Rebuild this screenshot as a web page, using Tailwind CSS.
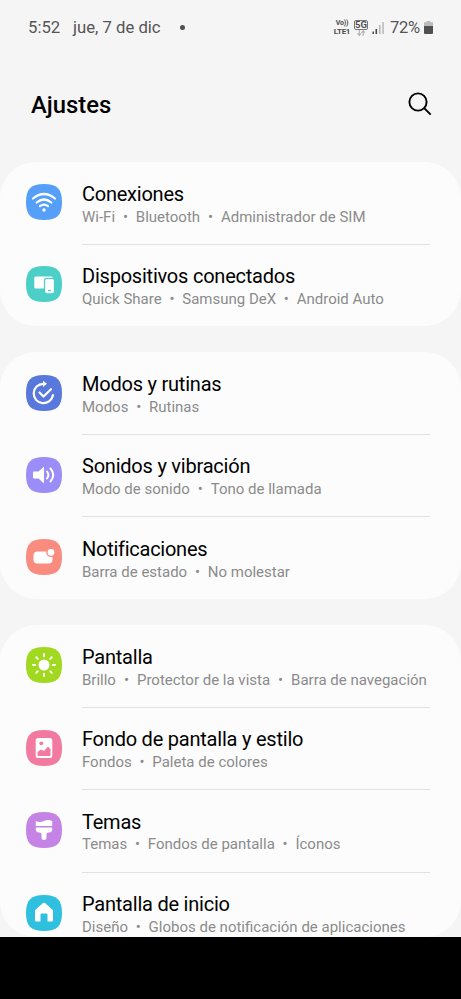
<!DOCTYPE html>
<html lang="es">
<head>
<meta charset="utf-8">
<title>Ajustes</title>
<script src="https://cdn.jsdelivr.net/npm/@tailwindcss/browser@4"></script>
</head>
<body class="flex h-[999px] w-[461px] flex-col overflow-hidden bg-[#f5f5f5] font-[Roboto,sans-serif] text-black">
<div class="flex h-[54px] shrink-0 items-center pl-[28px] pr-[28px] pt-px text-[16.700px] leading-[20px] text-[#555]">
  <span class="w-[45px]">5:52</span>
  <span>jue, 7 de dic</span>
  <span class="ml-[19px] size-[5px] rounded-full bg-[#505050]"></span>
  <div class="ml-auto flex items-center">
    <div class="mr-[3px] flex w-[18px] flex-col items-center font-bold text-[#4c4c4c]"><span class="text-[7px] leading-[8px] tracking-[-0.200px]">Vo))</span><span class="text-[8px] leading-[9px] tracking-[-0.300px]">LTE1</span></div>
    <div class="mr-[4px] flex w-[14px] flex-col items-center">
      <span class="flex h-[10px] w-[14px] items-center justify-center rounded-[2px] border border-[#777] text-[9.500px] font-bold leading-[8px] text-[#505050]">5G</span>
      <svg class="h-[6px] w-[10px]" viewBox="0 0 10 7" fill="none" stroke="#aaa" stroke-width="1.200"><path d="M3 0v6M.8 4 3 6.200 5.200 4M7.500 7V1M5.500 3l2-2 2 2"/></svg>
    </div>
    <svg class="mr-[6px] h-[13px] w-[12px]" viewBox="0 0 12 13"><path d="M.5 10.500h1.500V13H.5zM3.500 8h1.600v5H3.500z" fill="#4b4b4b"/><path d="M7 4h1.600v9H7zM10.300 1h1.500v12h-1.500z" fill="#b9b9b9"/></svg>
    <span class="w-[34px] whitespace-nowrap text-[16.600px] tracking-[-0.300px]">72%</span>
    <svg class="h-[13px] w-[9px]" viewBox="0 0 9 13"><path d="M2.500 0h4v1.300H9V6H0V1.300h2.500z" fill="#bbb"/><path d="M0 5h9v7q0 1-1 1H1q-1 0-1-1z" fill="#505050"/></svg>
  </div>
</div>
<header class="flex h-[108px] shrink-0 items-center justify-between pb-[8px] pl-[31px] pr-[29px]">
  <h1 class="pt-[2px] text-[23.800px] font-medium leading-[32px]">Ajustes</h1>
  <svg class="size-[24px]" viewBox="0 0 24 24" fill="none" stroke="#000" stroke-width="1.900"><circle cx="10" cy="10" r="8.600"/><path d="m16.200 16.200 6.500 6.500"/></svg>
</header>
<main class="flex h-[775px] shrink-0 flex-col gap-[26px] overflow-hidden">
  <section class="h-[164px] shrink-0 rounded-[36px] bg-[#fcfcfc] pl-[25.600px] pr-[31px]">
    <div class="flex h-[83px]">
      <svg class="mt-[22.400px] mr-[20.400px] size-[36px] shrink-0" viewBox="0 0 36 36" fill="none"><path d="M18 0C31 0 36 5 36 18S31 36 18 36 0 31 0 18 5 0 18 0Z" fill="#559ff8"/><g stroke="#fff" stroke-width="2.200" stroke-linecap="round"><path d="M7 14.500q11-9 22 0M10.700 18.500q7.300-6 14.600 0M14 22.200q4-3.200 8 0"/></g><circle cx="18" cy="26" r="1.700" fill="#fff"/></svg>
      <div class="flex-1 border-b border-[#e2e2e2] pt-[19px]"><h2 class="text-[20px] leading-[26px] tracking-[-0.240px]">Conexiones</h2><p class="flex text-[15px] leading-[20px] text-[#8b8b8b]"><span>Wi-Fi</span><i class="w-[20.800px] text-center not-italic">•</i><span>Bluetooth</span><i class="w-[20.800px] text-center not-italic">•</i><span>Administrador de SIM</span></p></div>
    </div>
    <div class="flex h-[81px]">
      <svg class="mt-[21.300px] mr-[20.400px] size-[36px] shrink-0" viewBox="0 0 36 36"><path d="M18 0C31 0 36 5 36 18S31 36 18 36 0 31 0 18 5 0 18 0Z" fill="#4bcfc7"/><rect x="8.300" y="10.500" width="18.500" height="12" rx="1.500" fill="#fff"/><rect x="18.500" y="12.300" width="10" height="15.500" rx="2.300" fill="#fff" stroke="#4bcfc7" stroke-width="1.300"/><path d="M22 24.500h3" stroke="#4bcfc7" stroke-width="1.200"/></svg>
      <div class="flex-1 pt-[18px]"><h2 class="text-[20px] leading-[26px] tracking-[-0.220px]">Dispositivos conectados</h2><p class="flex text-[15px] leading-[20px] text-[#8b8b8b]"><span>Quick Share</span><i class="w-[20.600px] text-center not-italic">•</i><span>Samsung DeX</span><i class="w-[20.600px] text-center not-italic">•</i><span>Android Auto</span></p></div>
    </div>
  </section>
  <section class="h-[247px] shrink-0 rounded-[36px] bg-[#fcfcfc] pl-[25.600px] pr-[31px]">
    <div class="flex h-[83px]">
      <svg class="mt-[22.500px] mr-[20.400px] size-[36px] shrink-0" viewBox="0 0 36 36" fill="none"><path d="M18 0C31 0 36 5 36 18S31 36 18 36 0 31 0 18 5 0 18 0Z" fill="#5878dc"/><g stroke="#fff" stroke-width="2.200" stroke-linecap="round" stroke-linejoin="round"><path d="M18.500 8.800h-1.200A9.700 9.700 0 1 0 27 20"/><path d="m13.500 17.500 4 4 7.500-7.300"/></g><path d="m17 5.700 4 3.100-4 3.100z" fill="#fff"/></svg>
      <div class="flex-1 border-b border-[#e2e2e2] pt-[19px]"><h2 class="text-[20px] leading-[26px] tracking-[-0.220px]">Modos y rutinas</h2><p class="flex text-[15px] leading-[20px] text-[#8b8b8b]"><span>Modos</span><i class="w-[20.600px] text-center not-italic">•</i><span>Rutinas</span></p></div>
    </div>
    <div class="flex h-[82px]">
      <svg class="mt-[22px] mr-[20.400px] size-[36px] shrink-0" viewBox="0 0 36 36" fill="none"><path d="M18 0C31 0 36 5 36 18S31 36 18 36 0 31 0 18 5 0 18 0Z" fill="#9a8df8"/><path d="M8 14.500h4.500l5.500-5v17l-5.500-5H8q-1 0-1-1v-5q0-1 1-1Z" fill="#fff"/><path d="M21 14.500q2.800 3.500 0 7M24.500 11.500q5.500 6.500 0 13" stroke="#fff" stroke-width="2" stroke-linecap="round"/></svg>
      <div class="flex-1 border-b border-[#e2e2e2] pt-[18px]"><h2 class="text-[20px] leading-[26px] tracking-[-0.220px]">Sonidos y vibración</h2><p class="flex text-[15px] leading-[20px] text-[#8b8b8b]"><span>Modo de sonido</span><i class="w-[21px] text-center not-italic">•</i><span>Tono de llamada</span></p></div>
    </div>
    <div class="flex h-[82px]">
      <svg class="mt-[22.400px] mr-[20.400px] size-[36px] shrink-0" viewBox="0 0 36 36"><path d="M18 0C31 0 36 5 36 18S31 36 18 36 0 31 0 18 5 0 18 0Z" fill="#fa8b7f"/><rect x="7.500" y="12.500" width="19" height="12" rx="4" fill="#fff"/><circle cx="25" cy="13.300" r="4.100" fill="#fff" stroke="#fa8b7f" stroke-width="1.400"/></svg>
      <div class="flex-1 pt-[19px]"><h2 class="text-[20px] leading-[26px] tracking-[-0.260px]">Notificaciones</h2><p class="flex text-[15px] leading-[20px] text-[#8b8b8b]"><span>Barra de estado</span><i class="w-[20.600px] text-center not-italic">•</i><span>No molestar</span></p></div>
    </div>
  </section>
  <section class="h-[312px] shrink-0 overflow-hidden rounded-[36px] bg-[#fcfcfc] pl-[25.600px] pr-[31px]">
    <div class="flex h-[83px]">
      <svg class="mt-[22.400px] mr-[20.400px] size-[36px] shrink-0" viewBox="0 0 36 36"><path d="M18 0C31 0 36 5 36 18S31 36 18 36 0 31 0 18 5 0 18 0Z" fill="#a1d820"/><circle cx="18" cy="18" r="5.500" fill="#fff"/><path d="M18 7v2.200M18 26.800V29M7 18h2.200M26.800 18H29M10.200 10.200l1.600 1.600M24.200 24.200l1.600 1.600M10.200 25.800l1.600-1.600M24.200 11.800l1.600-1.600" stroke="#fff" stroke-width="1.900" stroke-linecap="round"/></svg>
      <div class="flex-1 border-b border-[#e2e2e2] pt-[19px]"><h2 class="text-[20px] leading-[26px] tracking-[-0.220px]">Pantalla</h2><p class="flex whitespace-nowrap text-[15px] leading-[20px] text-[#8b8b8b]"><span>Brillo</span><i class="w-[21px] text-center not-italic">•</i><span>Protector de la vista</span><i class="w-[21px] text-center not-italic">•</i><span>Barra de navegación</span></p></div>
    </div>
    <div class="flex h-[82px]">
      <svg class="mt-[22px] mr-[20.400px] size-[36px] shrink-0" viewBox="0 0 36 36"><path d="M18 0C31 0 36 5 36 18S31 36 18 36 0 31 0 18 5 0 18 0Z" fill="#f2799f"/><rect x="9.700" y="8" width="16.600" height="20" rx="2.500" fill="#fff"/><circle cx="15.300" cy="13.300" r="1.900" fill="#f2799f"/><path d="m11.500 22 3.500-2.500 3 1.500 4-4.500 2.500 2.800V25q0 1-1 1h-11q-1 0-1-1z" fill="#f2799f"/></svg>
      <div class="flex-1 border-b border-[#e2e2e2] pt-[18px]"><h2 class="text-[20px] leading-[26px] tracking-[-0.220px]">Fondo de pantalla y estilo</h2><p class="flex text-[15px] leading-[20px] text-[#8b8b8b]"><span>Fondos</span><i class="w-[20.600px] text-center not-italic">•</i><span>Paleta de colores</span></p></div>
    </div>
    <div class="flex h-[83px]">
      <svg class="mt-[22.200px] mr-[20.400px] size-[36px] shrink-0" viewBox="0 0 36 36" fill="#fff"><path d="M18 0C31 0 36 5 36 18S31 36 18 36 0 31 0 18 5 0 18 0Z" fill="#c483e5"/><path d="M9.800 9q4 1.800 8 0t8.400 0v5H9.800zM9.800 15.500h16.400V17.500q0 2.500-3 3h-1q-1.700.500-1.700 2v3q0 2.500-2.500 2.500t-2.500-2.500v-3q0-1.500-1.700-2h-1q-3-.5-3-3z"/></svg>
      <div class="flex-1 border-b border-[#e2e2e2] pt-[19px]"><h2 class="text-[20px] leading-[26px] tracking-[-0.220px]">Temas</h2><p class="-mt-px flex text-[15px] leading-[20px] text-[#8b8b8b]"><span>Temas</span><i class="w-[20.600px] text-center not-italic">•</i><span>Fondos de pantalla</span><i class="w-[20.600px] text-center not-italic">•</i><span>Íconos</span></p></div>
    </div>
    <div class="flex h-[82px]">
      <svg class="mt-[21.600px] mr-[20.400px] size-[36px] shrink-0" viewBox="0 0 36 36"><path d="M18 0C31 0 36 5 36 18S31 36 18 36 0 31 0 18 5 0 18 0Z" fill="#2fc0df"/><path d="M16.700 8.200q1.300-1 2.600 0l7 6.200q.7.600.7 1.600v9q0 1.500-1.500 1.500h-4v-6.700q0-1.200-1.200-1.200h-4.600q-1.200 0-1.200 1.200v6.700h-4Q9 26.500 9 25v-9q0-1 .7-1.600z" fill="#fff"/></svg>
      <div class="flex-1 pt-[18px]"><h2 class="text-[20px] leading-[26px] tracking-[-0.220px]">Pantalla de inicio</h2><p class="flex whitespace-nowrap text-[15px] leading-[20px] text-[#8b8b8b]"><span>Diseño</span><i class="w-[20.600px] text-center not-italic">•</i><span>Globos de notificación de aplicaciones</span></p></div>
    </div>
  </section>
</main>
<div class="flex-1 bg-black"></div>
</body>
</html>
